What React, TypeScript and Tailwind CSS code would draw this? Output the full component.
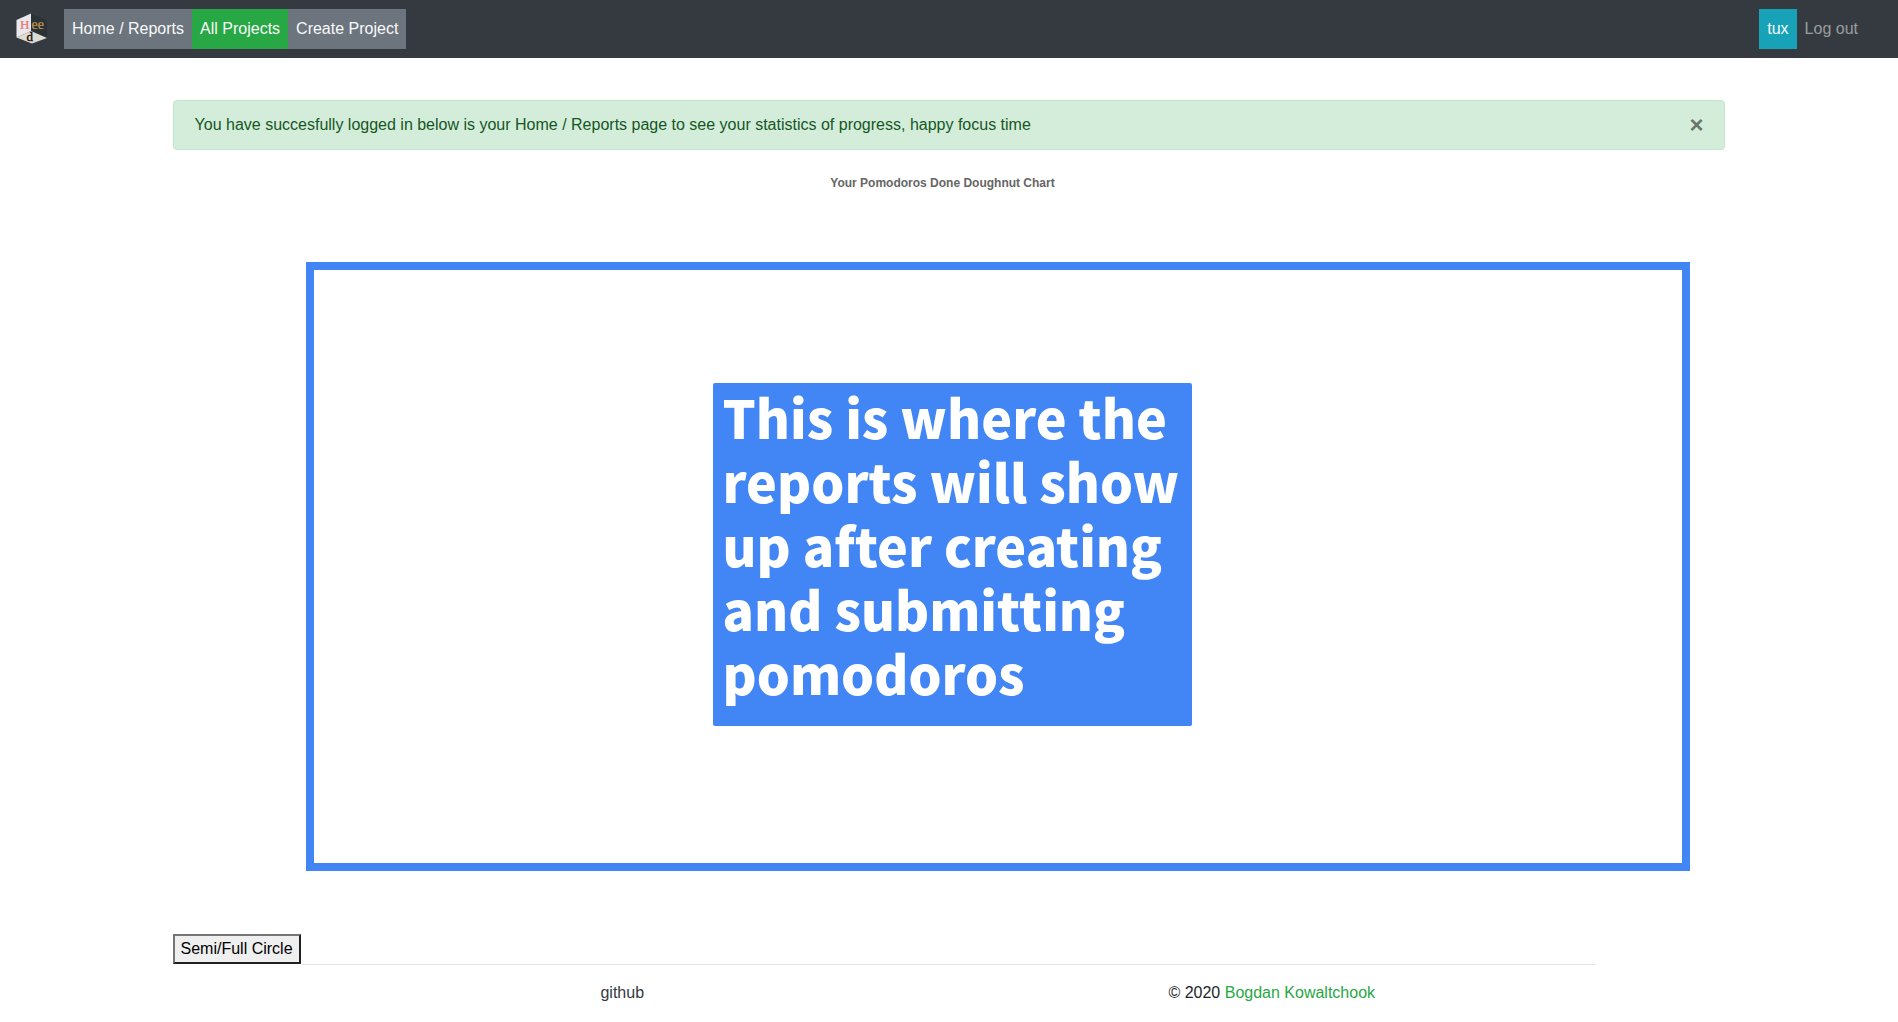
import { useState } from "react";

function Logo() {
  return (
    <svg width="32" height="32" viewBox="0 0 32 32" role="img" aria-label="Heed">
      <polygon points="15,0.5 31,7.5 31,25 15,18" fill="#2b3236" />
      <polygon points="15,0.5 0.5,7 0.5,24.5 15,18" fill="#e9e9ed" />
      <polygon points="15,18 31,25 16,30.5 0.5,24.5" fill="#dedcd0" />
      <g fontFamily="'Liberation Serif', serif">
        <text x="4" y="16" fontSize="13" fill="#f26d6d" stroke="#f26d6d" strokeWidth="0.2">H</text>
        <text x="15.5" y="16" fontSize="14" fill="#c2964e" stroke="#c2964e" strokeWidth="0.2">ee</text>
        <text x="10.5" y="28" fontSize="13" fill="#111111" stroke="#111111" strokeWidth="0.4">d</text>
      </g>
    </svg>
  );
}

function Navbar() {
  return (
    <nav className="flex items-center bg-[#343a40] px-4 py-[9px] text-[#f8f9fa]">
      <a href="#home" className="mr-4">
        <Logo />
      </a>
      <a href="#reports" className="bg-[#6c757d] p-2">Home / Reports</a>
      <a href="#projects" className="bg-[#28a745] p-2">All Projects</a>
      <a href="#create" className="bg-[#6c757d] p-2">Create Project</a>
      <div className="mr-4 ml-auto flex">
        <a href="#profile" className="bg-[#17a2b8] p-2">tux</a>
        <a href="#logout" className="p-2 text-white/50">Log out</a>
      </div>
    </nav>
  );
}

export default function App() {
  const [alertOpen, setAlertOpen] = useState(true);

  return (
    <div className="bg-white font-['Liberation_Sans',Arial,sans-serif] text-base text-[#212529]">
      <Navbar />
      <main className="mx-auto w-9/11 pt-[42px]">
        {alertOpen && (
          <div role="alert" className="flex items-center justify-between rounded border border-[#c3e6cb] bg-[#d4edda] px-[21px] py-3 text-[#155724]">
            <span>You have succesfully logged in below is your Home / Reports page to see your statistics of progress, happy focus time</span>
            <button type="button" aria-label="Close" onClick={() => setAlertOpen(false)} className="text-2xl leading-6 font-bold text-black opacity-50">
              ×
            </button>
          </div>
        )}

        <section className="pt-[25px]">
          <h2 className="pr-[13px] text-center text-xs leading-4 font-bold text-[#666666]">Your Pomodoros Done Doughnut Chart</h2>
          <div className="mt-[71px] mr-[35px] ml-[133px] border-8 border-[#4285f4] pt-[113px] pb-[137px] pl-[399px]">
            <p className="w-[479px] rounded-xs bg-[#4285f4] px-[10px] pt-[2px] pb-[21px] font-['Noto_Sans_CJK_SC',sans-serif] text-[52px] leading-[64px] font-black text-white">
              This is where the reports will show up after creating and submitting pomodoros
            </p>
          </div>
        </section>

        <div className="mt-[63px] flex items-end">
          <button type="button" className="border-2 border-t-[#767676] border-r-[#212121] border-b-[#212121] border-l-[#767676] bg-[#efefef] px-1.5 py-px text-black">
            Semi/Full Circle
          </button>
        </div>
      </main>

      <footer className="mx-auto w-9/11 pr-[129px] pl-[129px]">
        <hr className="border-t border-black/10" />
        <div className="-ml-1 grid grid-cols-2 pt-4 text-center">
          <p>
            <a href="#github" className="text-[#343a40]">github</a>
          </p>
          <p>
            © 2020 <a href="#author" className="text-[#28a745]">Bogdan Kowaltchook</a>
          </p>
        </div>
      </footer>
    </div>
  );
}
